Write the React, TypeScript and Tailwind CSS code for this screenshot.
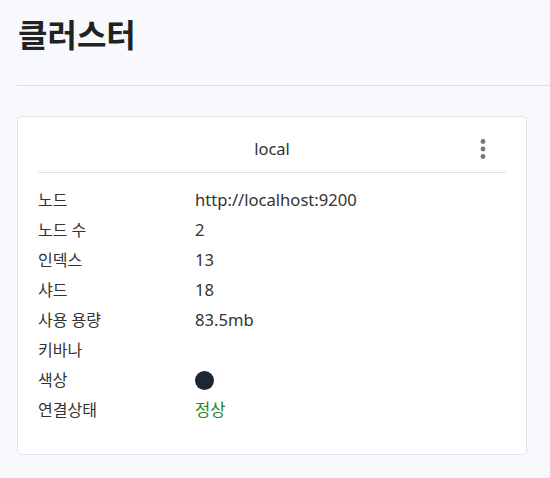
const FONT = { fontFamily: '"Noto Sans", "Noto Sans CJK KR", sans-serif' };

type Row = { label: string; value?: string; kind?: "text" | "dot" | "ok" };

const rows: Row[] = [
  { label: "노드", value: "http://localhost:9200" },
  { label: "노드 수", value: "2" },
  { label: "인덱스", value: "13" },
  { label: "샤드", value: "18" },
  { label: "사용 용량", value: "83.5mb" },
  { label: "키바나" },
  { label: "색상", kind: "dot" },
  { label: "연결상태", value: "정상", kind: "ok" },
];

function Kebab() {
  return (
    <svg width="8" height="22" viewBox="0 0 8 22" aria-hidden="true">
      <circle cx="4" cy="3.5" r="2.4" fill="#777" />
      <circle cx="4" cy="11" r="2.4" fill="#777" />
      <circle cx="4" cy="18.5" r="2.4" fill="#777" />
    </svg>
  );
}

export default function App() {
  return (
    <div className="min-h-[478px] bg-[#f8f9fc] pl-[17px] pt-[15px] pb-6 text-[#333]" style={FONT}>
      <h1 className="pl-px text-[32px] font-bold leading-[40px] text-[#222]">클러스터</h1>
      <div className="mt-[30px] border-t border-[#dcdee3]" />

      <section className="mt-[30px] mr-[23px] rounded-[5px] border border-[#dfe1e5] bg-white px-5 pb-[29px]">
        <div className="flex h-[56px] items-center border-b border-[#e0e0e0] pt-[9px]">
          <div className="w-[35px]" />
          <div className="flex-1 text-center text-[16.5px] text-[#333]">local</div>
          <button type="button" className="mr-[11px] flex w-6 items-center justify-center" aria-label="menu">
            <Kebab />
          </button>
        </div>

        <div className="pt-[12px]">
          {rows.map((r) => (
            <div key={r.label} className="flex h-[30px] items-center text-[16px]">
              <div className="w-[157px] text-[#333]">{r.label}</div>
              <div className="flex-1 text-[16.6px]">
                {r.kind === "dot" ? (
                  <span className="block h-[19px] w-[19px] rounded-full bg-[#1e2533]" />
                ) : r.kind === "ok" ? (
                  <span className="text-[#1b8a2a]">{r.value}</span>
                ) : (
                  <span className="text-[#333]">{r.value}</span>
                )}
              </div>
            </div>
          ))}
        </div>
      </section>
    </div>
  );
}
